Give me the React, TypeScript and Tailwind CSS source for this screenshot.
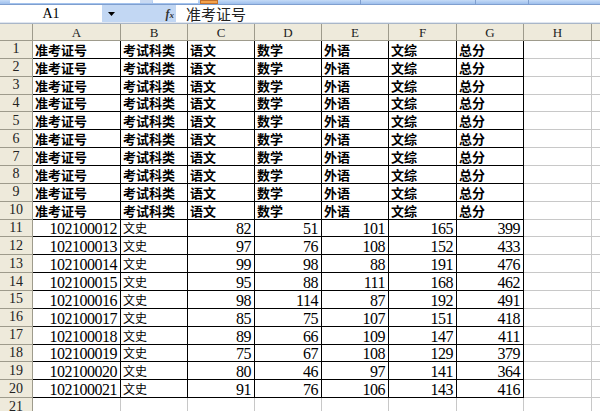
import React from "react";

const COLS = "grid grid-cols-[33px_88px_67px_67px_67px_67px_68px_67px_68px_1fr]";
const letters = ["A", "B", "C", "D", "E", "F", "G", "H", ""];
const heads = ["准考证号", "考试科类", "语文", "数学", "外语", "文综", "总分"];
const data: number[][] = [
  [102100012, 82, 51, 101, 165, 399],
  [102100013, 97, 76, 108, 152, 433],
  [102100014, 99, 98, 88, 191, 476],
  [102100015, 95, 88, 111, 168, 462],
  [102100016, 98, 114, 87, 192, 491],
  [102100017, 85, 75, 107, 151, 418],
  [102100018, 89, 66, 109, 147, 411],
  [102100019, 75, 67, 108, 129, 379],
  [102100020, 80, 46, 97, 141, 364],
  [102100021, 91, 76, 106, 143, 416],
];

const serif = "font-['Liberation_Serif',serif]";
const cjk = "font-['Noto_Sans_CJK_SC','Noto_Sans',sans-serif]";

function RowHead({ n }: { n: number }) {
  return (
    <div className={`flex items-center justify-center bg-[#eeeadb] border-r border-b border-[#9e9b8c] text-[14px] text-[#222] leading-none ${serif}`}>
      {n}
    </div>
  );
}

function Blank({ last }: { last?: boolean }) {
  return <div className={`border-b border-[#c8c8c8] ${last ? "" : "border-r"} bg-white`} />;
}

export default function App() {
  const rows: React.ReactNode[] = [];
  for (let r = 1; r <= 10; r++) {
    rows.push(
      <div key={r} className={`${COLS} h-[17.87px]`}>
        <RowHead n={r} />
        {heads.map((h, i) => (
          <div
            key={i}
            className={`flex items-end pl-[2px] pb-[1px] border-r border-b border-black bg-white text-[13px] font-bold text-black leading-[15px] whitespace-nowrap overflow-hidden ${cjk}`}
          >
            {h}
          </div>
        ))}
        <Blank />
        <Blank last />
      </div>
    );
  }
  data.forEach((d, idx) => {
    const r = 11 + idx;
    rows.push(
      <div key={r} className={`${COLS} h-[17.87px]`}>
        <RowHead n={r} />
        <div className={`flex items-end justify-end pr-[3px] border-r border-b border-black bg-white text-[16px] tracking-[-0.5px] leading-[15px] text-black ${serif}`}>
          {d[0]}
        </div>
        <div className={`flex items-end pl-[2px] pb-[1px] border-r border-b border-black bg-white text-[12px] leading-[14px] text-black ${cjk}`}>
          文史
        </div>
        {d.slice(1).map((v, i) => (
          <div
            key={i}
            className={`flex items-end justify-end pr-[3px] border-r border-b border-black bg-white text-[16px] tracking-[-0.5px] leading-[15px] text-black ${serif}`}
          >
            {v}
          </div>
        ))}
        <Blank />
        <Blank last />
      </div>
    );
  });
  rows.push(
    <div key={21} className={`${COLS} h-[17.87px]`}>
      <RowHead n={21} />
      {Array.from({ length: 8 }).map((_, i) => (
        <Blank key={i} />
      ))}
      <Blank last />
    </div>
  );

  return (
    <div className="w-[600px] h-[411px] overflow-hidden bg-white relative">
      {/* toolbar remnant */}
      <div className="h-[5px] relative bg-gradient-to-b from-[#c5dbf7] to-[#9ebfec] border-b border-[#7f9fcf] flex">
        <div className="ml-[10px] w-[130px] h-[3px] bg-white" />
        <div className="w-[12px] h-[3px] bg-[#c8d9f2]" />
        <div className="w-[45px] h-[3px] bg-white ml-[1px]" />
        <div className="w-[18px] h-[4px] bg-[#f5a24a] ml-[2px] border border-[#c4702a]" />
        <div className="ml-[142px] w-px h-[4px] bg-[#7f9fcf]" />
        <div className="ml-[114px] w-px h-[4px] bg-[#7f9fcf]" />
        <div className="ml-[52px] w-px h-[4px] bg-[#7f9fcf]" />
      </div>
      {/* formula bar */}
      <div className="h-[17px] flex bg-[#c2d7f3]">
        <div className={`w-[102px] bg-white flex items-center justify-center text-[14px] text-black leading-none ${serif}`}>
          A1
        </div>
        <div className="w-[18px] flex items-center justify-center">
          <svg width="7" height="4" viewBox="0 0 7 4">
            <path d="M0 0h7L3.5 4z" fill="#000" />
          </svg>
        </div>
        <div className="w-[56px] flex items-center justify-end pr-[2px]">
          <span className={`italic font-bold text-[12px] text-[#333] leading-none ${serif}`}>
            f<span className="text-[9px]">x</span>
          </span>
        </div>
        <div className={`flex-1 bg-white flex items-center pl-[10px] text-[15px] text-[#222] leading-none ${cjk}`}>
          准考证号
        </div>
      </div>
      <div className="h-[2px] bg-[#dfe6f0] border-b border-[#a9b6c8]" />
      {/* column header */}
      <div className={`${COLS} h-[17px]`}>
        <div className="bg-[#eeeadb] border-r border-b border-[#9e9b8c]" />
        {letters.map((l, i) => (
          <div
            key={i}
            className={`flex items-center justify-center bg-[#eeeadb] border-b border-[#9e9b8c] ${i < 8 ? "border-r" : ""} text-[13px] text-[#222] leading-none ${serif}`}
          >
            {l}
          </div>
        ))}
      </div>
      {rows}
    </div>
  );
}
